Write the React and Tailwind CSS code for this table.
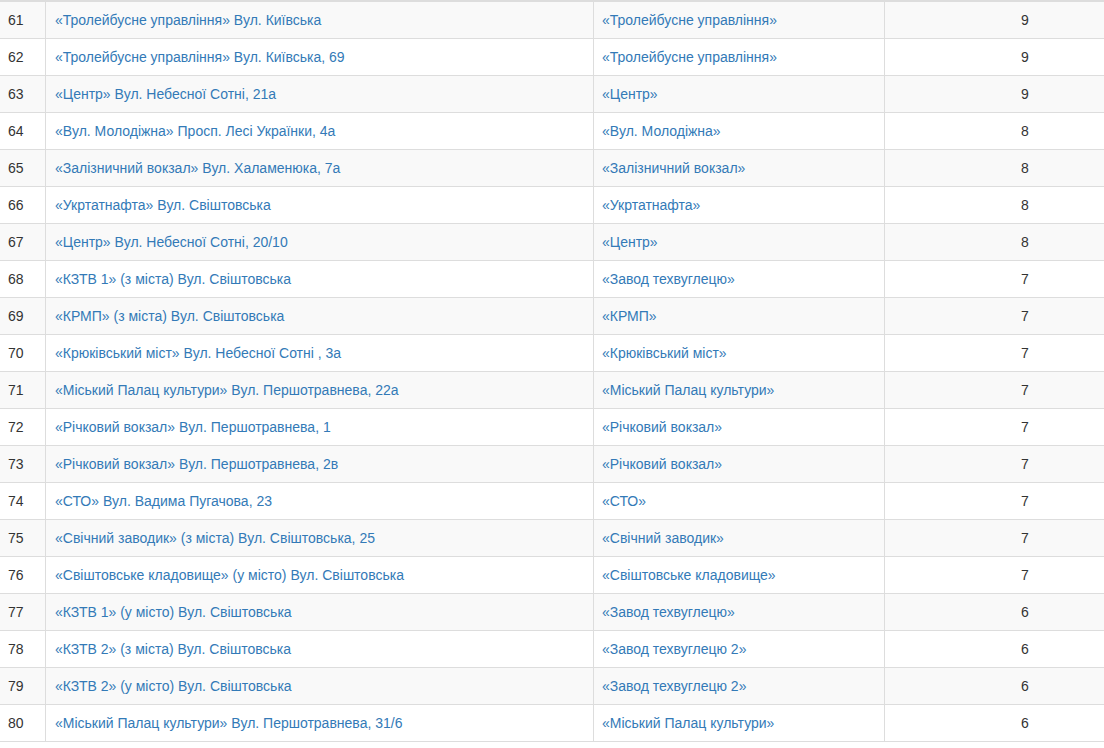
const rows = [
  [61, "«Тролейбусне управління» Вул. Київська", "«Тролейбусне управління»", 9],
  [62, "«Тролейбусне управління» Вул. Київська, 69", "«Тролейбусне управління»", 9],
  [63, "«Центр» Вул. Небесної Сотні, 21а", "«Центр»", 9],
  [64, "«Вул. Молодіжна» Просп. Лесі Українки, 4а", "«Вул. Молодіжна»", 8],
  [65, "«Залізничний вокзал» Вул. Халаменюка, 7а", "«Залізничний вокзал»", 8],
  [66, "«Укртатнафта» Вул. Свіштовська", "«Укртатнафта»", 8],
  [67, "«Центр» Вул. Небесної Сотні, 20/10", "«Центр»", 8],
  [68, "«КЗТВ 1» (з міста) Вул. Свіштовська", "«Завод техвуглецю»", 7],
  [69, "«КРМП» (з міста) Вул. Свіштовська", "«КРМП»", 7],
  [70, "«Крюківський міст» Вул. Небесної Сотні , 3а", "«Крюківський міст»", 7],
  [71, "«Міський Палац культури» Вул. Першотравнева, 22а", "«Міський Палац культури»", 7],
  [72, "«Річковий вокзал» Вул. Першотравнева, 1", "«Річковий вокзал»", 7],
  [73, "«Річковий вокзал» Вул. Першотравнева, 2в", "«Річковий вокзал»", 7],
  [74, "«СТО» Вул. Вадима Пугачова, 23", "«СТО»", 7],
  [75, "«Свічний заводик» (з міста) Вул. Свіштовська, 25", "«Свічний заводик»", 7],
  [76, "«Свіштовське кладовище» (у місто) Вул. Свіштовська", "«Свіштовське кладовище»", 7],
  [77, "«КЗТВ 1» (у місто) Вул. Свіштовська", "«Завод техвуглецю»", 6],
  [78, "«КЗТВ 2» (з міста) Вул. Свіштовська", "«Завод техвуглецю 2»", 6],
  [79, "«КЗТВ 2» (у місто) Вул. Свіштовська", "«Завод техвуглецю 2»", 6],
  [80, "«Міський Палац культури» Вул. Першотравнева, 31/6", "«Міський Палац культури»", 6],
];

export default function App() {
  return (
    <div className="w-full overflow-hidden bg-white text-[14px] leading-[20px] text-[#333] font-['Liberation_Sans',Arial,sans-serif]">
      <div className="w-[1165px]">
        <div className="h-[2px] bg-[#ddd]" />
        {rows.map((r, i) => (
          <div
            key={r[0]}
            className={
              "grid grid-cols-[46px_548px_291px_280px] border-b border-[#ddd] " +
              (i % 2 === 0 ? "bg-[#f9f9f9]" : "bg-white")
            }
          >
            <div className="py-2 pl-2 pr-1 border-r border-[#ddd]">{r[0]}</div>
            <div className="py-2 pl-[9px] pr-2 border-r border-[#ddd]">
              <a href="#" className="text-[#337ab7]">{r[1]}</a>
            </div>
            <div className="py-2 px-2 border-r border-[#ddd]">
              <a href="#" className="text-[#337ab7]">{r[2]}</a>
            </div>
            <div className="py-2 px-2 text-center">{r[3]}</div>
          </div>
        ))}
      </div>
    </div>
  );
}
